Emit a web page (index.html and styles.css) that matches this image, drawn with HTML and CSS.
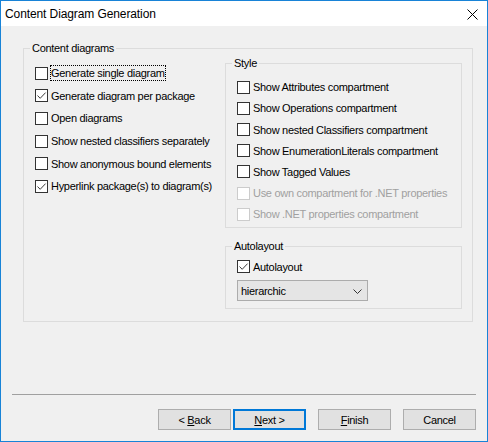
FILE: index.html
```html
<!DOCTYPE html>
<html>
<head>
<meta charset="utf-8">
<link rel="stylesheet" href="styles.css">
</head>
<body>
<div class="window">
  <div class="titlebar">
    <span class="title">Content Diagram Generation</span>
    <svg class="close" width="11" height="11" viewBox="0 0 11 11"><path d="M0.5 0.5 L10.5 10.5 M10.5 0.5 L0.5 10.5" stroke="#000" stroke-width="1" fill="none"/></svg>
  </div>
  <div class="main">
    <fieldset class="group outer">
      <legend>Content diagrams</legend>
      <div class="cols">
        <div class="left">
          <div class="row big"><span class="cb"></span><span class="lbl focus">Generate single diagram</span></div>
          <div class="row big"><span class="cb"><svg viewBox="0 0 11 11" width="11" height="11"><path d="M1.5 5.5 L4.2 8.3 L9.6 2.6" stroke="#3c3c3c" stroke-width="1" fill="none"/></svg></span><span class="lbl">Generate diagram per package</span></div>
          <div class="row big"><span class="cb"></span><span class="lbl">Open diagrams</span></div>
          <div class="row big"><span class="cb"></span><span class="lbl">Show nested classifiers separately</span></div>
          <div class="row big"><span class="cb"></span><span class="lbl">Show anonymous bound elements</span></div>
          <div class="row big"><span class="cb"><svg viewBox="0 0 11 11" width="11" height="11"><path d="M1.5 5.5 L4.2 8.3 L9.6 2.6" stroke="#3c3c3c" stroke-width="1" fill="none"/></svg></span><span class="lbl">Hyperlink package(s) to diagram(s)</span></div>
        </div>
        <div class="right">
          <fieldset class="group style">
            <legend>Style</legend>
            <div class="inner style-inner">
              <div class="row"><span class="cb"></span><span class="lbl">Show Attributes compartment</span></div>
              <div class="row"><span class="cb"></span><span class="lbl">Show Operations compartment</span></div>
              <div class="row"><span class="cb"></span><span class="lbl">Show nested Classifiers compartment</span></div>
              <div class="row"><span class="cb"></span><span class="lbl">Show EnumerationLiterals compartment</span></div>
              <div class="row"><span class="cb"></span><span class="lbl">Show Tagged Values</span></div>
              <div class="row disabled"><span class="cb"></span><span class="lbl">Use own compartment for .NET properties</span></div>
              <div class="row disabled"><span class="cb"></span><span class="lbl">Show .NET properties compartment</span></div>
            </div>
          </fieldset>
          <fieldset class="group auto">
            <legend>Autolayout</legend>
            <div class="inner auto-inner">
              <div class="row"><span class="cb"><svg viewBox="0 0 11 11" width="11" height="11"><path d="M1.5 5.5 L4.2 8.3 L9.6 2.6" stroke="#3c3c3c" stroke-width="1" fill="none"/></svg></span><span class="lbl">Autolayout</span></div>
              <div class="combo"><span>hierarchic</span><svg width="9" height="5" viewBox="0 0 9 5"><path d="M0.5 0.5 L4.5 4.5 L8.5 0.5" stroke="#333" stroke-width="1" fill="none"/></svg></div>
            </div>
          </fieldset>
        </div>
      </div>
    </fieldset>
  </div>
  <div class="footer">
    <div class="sep"></div>
    <div class="buttons">
      <button class="btn back">&lt; <u>B</u>ack</button>
      <button class="btn next"><u>N</u>ext &gt;</button>
      <button class="btn finish"><u>F</u>inish</button>
      <button class="btn cancel">Cancel</button>
    </div>
  </div>
</div>
</body>
</html>
```

FILE: styles.css
```css
html, body {
  margin: 0;
  padding: 0;
}
body {
  font-family: "Liberation Sans", Arial, sans-serif;
  font-size: 11px;
  letter-spacing: -0.3px;
  color: #000;
  background: #f0f0f0;
}
.window {
  width: 488px;
  height: 442px;
  box-sizing: border-box;
  border: 1px solid #1883d7;
  background: #f0f0f0;
  display: flex;
  flex-direction: column;
}
.titlebar {
  height: 25px;
  background: #fff;
  display: flex;
  align-items: center;
  padding-left: 4px;
  padding-right: 9px;
  flex: none;
}
.title {
  font-size: 12px;
  letter-spacing: -0.1px;
  flex: 1;
}
.close {
  display: block;
  margin-top: 1px;
}
.main {
  flex: 1;
  padding: 16px 14px 0 22px;
}
.group {
  margin: 0;
  padding: 0;
  border: 1px solid #dcdcdc;
  min-width: 0;
}
.group legend {
  margin-left: 6px;
  padding: 0 2px;
  line-height: 13px;
  height: 13px;
}
.cols {
  display: flex;
}
.left {
  flex: 1;
  padding: 7px 0 0 11px;
}
.right {
  width: 237px;
  margin-right: 10px;
  padding: 2px 0 12px 0;
}
.row {
  height: 21.2px;
  display: flex;
  align-items: center;
}
.row.big {
  height: 22.6px;
}
.cb {
  width: 13px;
  height: 13px;
  box-sizing: border-box;
  border: 1px solid #333;
  background: #fff;
  flex: none;
  display: flex;
}
.cb svg {
  display: block;
}
.lbl {
  margin-left: 2px;
  border: 1px solid transparent;
  line-height: 14px;
  white-space: nowrap;
}
.lbl.focus {
  border: 1px dotted #000;
}
.disabled .cb {
  border-color: #cccccc;
}
.disabled .lbl {
  color: #a0a0a0;
}
.style-inner {
  padding: 6.6px 0 2px 11px;
}
.auto {
  margin-top: 12px;
}
.auto-inner {
  padding: 3px 0 7px 11px;
}
.combo {
  margin-top: 3px;
  width: 131px;
  height: 21px;
  box-sizing: border-box;
  border: 1px solid #acacac;
  background: #e5e5e5;
  display: flex;
  align-items: center;
  justify-content: space-between;
  padding: 0 5px 0 3px;
}
.combo svg {
  display: block;
  margin-top: 1px;
}
.footer {
  flex: none;
}
.sep {
  height: 1px;
  background: #a0a0a0;
  margin: 0 11px;
}
.buttons {
  display: flex;
  justify-content: flex-end;
  padding: 14px 11px 11px 0;
}
.btn {
  width: 73px;
  height: 21px;
  box-sizing: border-box;
  border: 1px solid #adadad;
  background: #e1e1e1;
  font: inherit;
  letter-spacing: inherit;
  color: #000;
  padding: 0;
  margin: 0;
  text-align: center;
}
.btn.next {
  border: 2px solid #0078d7;
  margin-left: 2px;
}
.btn.finish,
.btn.cancel {
  margin-left: 12px;
}
```
